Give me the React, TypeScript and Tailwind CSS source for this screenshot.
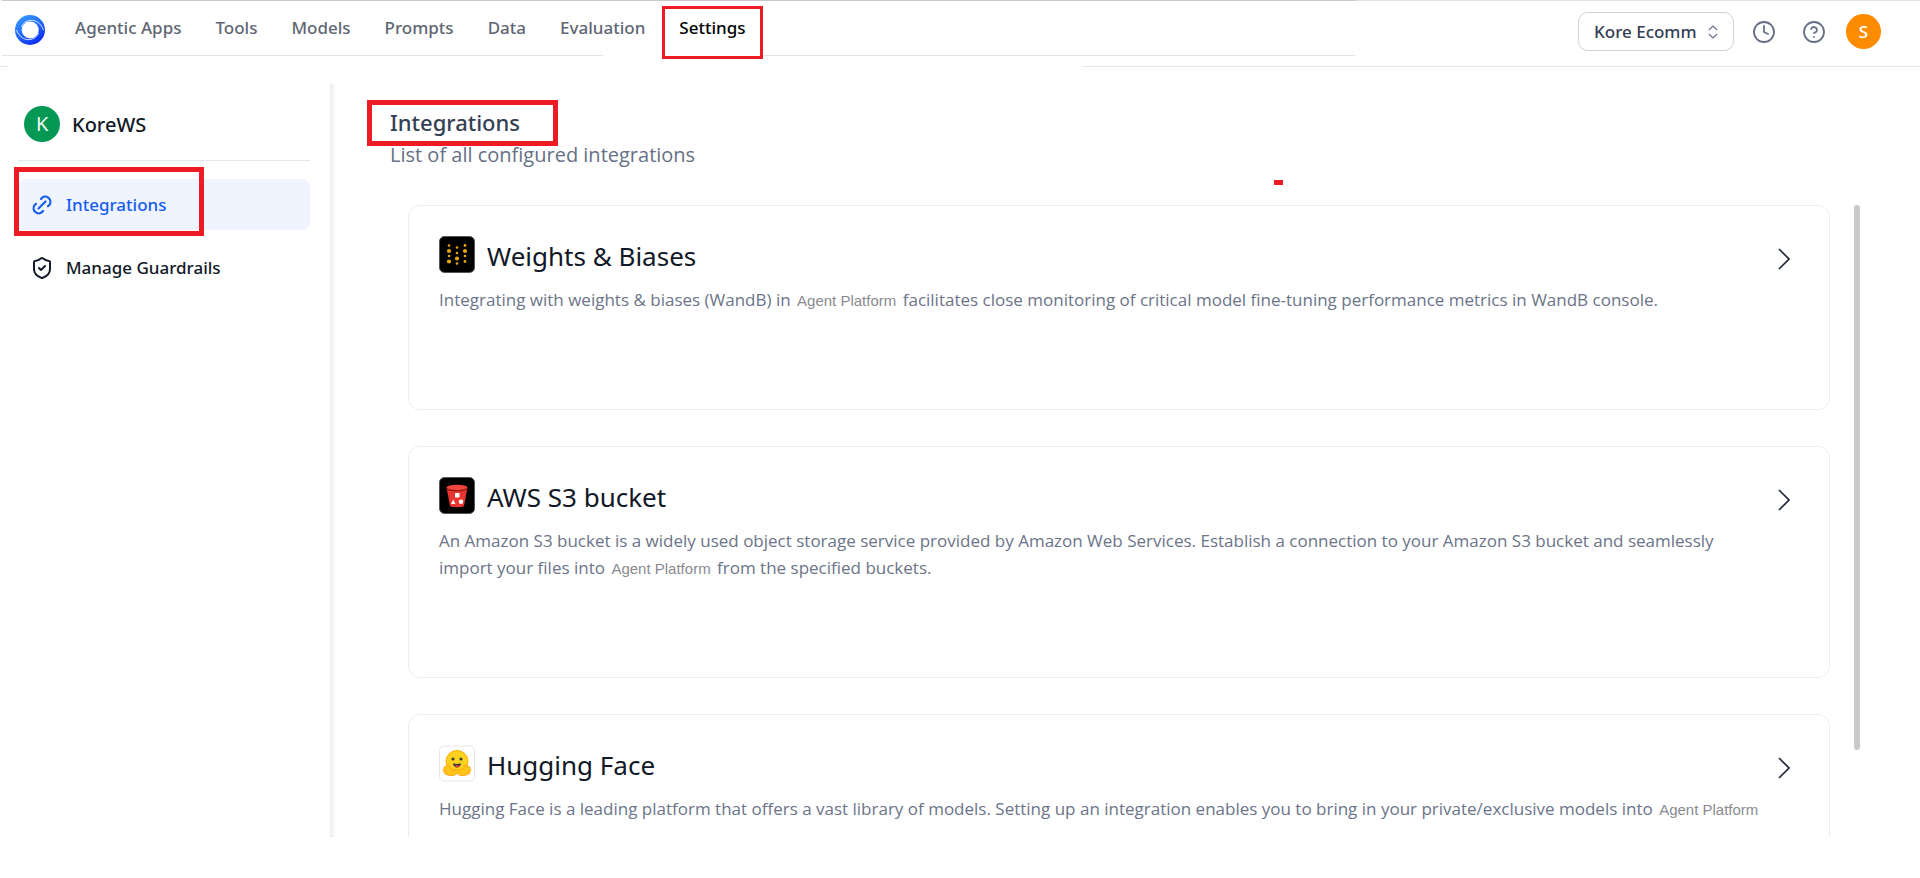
import { ReactNode } from 'react';
import { ChevronsUpDown, CircleHelp, Clock, ShieldCheck } from 'lucide-react';

const navItems = ['Agentic Apps', 'Tools', 'Models', 'Prompts', 'Data', 'Evaluation', 'Settings'];

function Logo() {
  return (
    <svg viewBox="0 0 30 30" className="size-[30px] shrink-0" aria-hidden="true">
      <defs>
        <linearGradient id="ring" x1="0.2" y1="0" x2="0.8" y2="1">
          <stop offset="0" stopColor="#3a9bff" />
          <stop offset="0.5" stopColor="#1f66fb" />
          <stop offset="1" stopColor="#0a22f0" />
        </linearGradient>
      </defs>
      <path
        fillRule="evenodd"
        fill="url(#ring)"
        d="M15 0a15 15 0 1 1 0 30a15 15 0 1 1 0-30zM15.200 6.500a8.500 8.500 0 1 0 0 17a8.500 8.500 0 1 0 0-17z"
      />
      <path d="M6.500 12C8.500 7 13 5 17.500 5.400 23 6 26.500 10 28.500 15" fill="none" stroke="#fff" strokeWidth="0.800" />
      <path d="M23.500 18c-2 5-6.500 7-11 6.600C7 24 3.500 20 1.500 15" fill="none" stroke="#fff" strokeWidth="0.800" />
    </svg>
  );
}

function WandbIcon() {
  const dots = [
    [10, 9.5, 1.3], [10, 15, 2.1], [10, 20, 1.3], [10, 25.5, 2.1],
    [18, 11.5, 1.3], [18, 17, 1.3], [18, 22.5, 2.1], [18, 27.5, 1.3],
    [26, 9.5, 1.4], [26, 15, 2.1], [26, 20, 1.3], [26, 25.5, 1.4],
  ];
  return (
    <svg viewBox="0 0 36 37" className="h-[37px] w-9 shrink-0" aria-hidden="true">
      <rect x="0.500" y="0.500" width="35" height="36" rx="5" fill="#000" stroke="#55555a" />
      {dots.map(([x, y, r]) => (
        <circle key={`${x}-${y}`} cx={x} cy={y} r={r} fill="#e5a50c" />
      ))}
    </svg>
  );
}

function BucketIcon() {
  return (
    <svg viewBox="0 0 36 37" className="h-[37px] w-9 shrink-0" aria-hidden="true">
      <rect x="0.500" y="0.500" width="35" height="36" rx="5" fill="#000" stroke="#55555a" />
      <path d="M7.500 10.500 11 29c1 1.600 13 1.600 14 0l3.500-18.500z" fill="#e8352f" />
      <ellipse cx="18" cy="10.500" rx="10.500" ry="2.800" fill="#f0453c" />
      <path d="M7.700 11.500c3 3 17.600 3 20.600 0" fill="none" stroke="#8f1712" strokeWidth="1.200" />
      <rect x="16" y="16" width="4.500" height="4.500" rx="0.500" fill="#fff" />
      <path d="m14.200 22.500 2.300 4.500h-4.500z" fill="#fff" />
      <circle cx="22" cy="24.800" r="2.300" fill="#fff" />
    </svg>
  );
}

function HuggingFaceIcon() {
  return (
    <svg viewBox="0 0 36 36" className="h-[37px] w-9 shrink-0" aria-hidden="true">
      <rect x="0.500" y="0.500" width="35" height="35" rx="4.500" fill="#fff" stroke="#e5e7eb" />
      <circle cx="18" cy="16" r="11" fill="#ffd21e" stroke="#ffac03" strokeWidth="1" />
      <path
        d="M5 23c-1.500 1.500-.5 3 .3 3.300-.5 1.700 1 2.500 2 2.500 2 1.500 8.500 2.500 10.700-1.300 2.200 3.800 8.700 2.800 10.700 1.300 1 0 2.500-.8 2-2.500.8-.3 1.800-1.800.3-3.300.3-1.800-1-2.800-2.500-2-1.500-2-3-1.500-3 .5-1.500 1-2.500 2-3 3h-9c-.5-1-1.500-2-3-3 0-2-1.500-2.500-3-.5-1.500-.8-2.800.2-2.500 2z"
        fill="#ffc31a"
        stroke="#ff9d0b"
        strokeWidth="0.900"
      />
      <circle cx="14" cy="13.500" r="1.600" fill="#3a3b45" />
      <circle cx="22" cy="13.500" r="1.600" fill="#3a3b45" />
      <path d="M14 17.500c1.500 1.200 6.500 1.200 8 0 0 2.800-1.800 4.500-4 4.500s-4-1.700-4-4.500z" fill="#3a3b45" />
      <path d="M15.800 20.700c.8-1.400 3.600-1.400 4.400 0-1.200 1.700-3.200 1.700-4.400 0z" fill="#f0453c" />
    </svg>
  );
}

function LinkIcon() {
  return (
    <svg viewBox="0 0 24 24" className="size-6" fill="none" stroke="currentColor" strokeWidth="2.200" strokeLinecap="round" aria-hidden="true">
      <path d="m8.500 15.500 7-7" />
      <path d="m11 6 1-1.200a5.200 5.200 0 0 1 7.300 7.300L18 13.200" />
      <path d="m13 18-1 1.200a5.200 5.200 0 0 1-7.300-7.300L6 10.800" />
    </svg>
  );
}

function Product() {
  return <span className="mx-0.5 font-['Liberation_Sans',sans-serif] text-[15px] text-[#8a8a90]">Agent Platform</span>;
}

function Card({ icon, title, size, children }: { icon: ReactNode; title: string; size: string; children: ReactNode }) {
  return (
    <article className={`shrink-0 rounded-xl border border-[#eaecf3] px-[30px] pt-[30px] ${size}`}>
      <div className="flex items-start">
        {icon}
        <h2 className="ml-3 pt-0.5 font-['Noto_Sans',sans-serif] text-[26px] leading-9 text-[#111827]">{title}</h2>
        <button type="button" aria-label={`Open ${title}`} className="mr-[9px] ml-auto pt-3">
          <svg viewBox="0 0 12 22" className="h-[22px] w-3" fill="none" stroke="#1f2937" strokeWidth="1.700">
            <path d="m1 1 10 10L1 21" />
          </svg>
        </button>
      </div>
      <p className="mt-3 pr-8 text-[17px] leading-[27px] text-[#6b7489]">{children}</p>
    </article>
  );
}

export default function App() {
  return (
    <div className="flex h-screen flex-col overflow-hidden bg-white pb-[41px] font-['Open_Sans','Noto_Sans',sans-serif]">
      <header className="relative flex h-[67px] shrink-0 items-start justify-between pr-[39px] pl-[15px]">
        <span className="absolute top-0 right-0 left-0.5 h-px bg-[#e0e0e0]" />
        <span className="absolute top-0 left-0.5 h-px w-[1353px] bg-[#c8c8c8]" />
        <span className="absolute top-[55px] left-0.5 h-px w-[601px] bg-[#e5e5e5]" />
        <span className="absolute top-[55px] left-[763px] h-px w-[592px] bg-[#e5e5e5]" />
        <span className="absolute top-[66px] left-0 h-px w-[9px] bg-[#e5e7eb]" />
        <span className="absolute top-[66px] right-0 left-[1082px] h-px bg-[#e5e7eb]" />
        <div className="flex items-center pt-[15px]">
          <Logo />
          <nav className="-mt-1 ml-[30px] flex gap-[34px] font-['Noto_Sans',sans-serif] text-[17px] leading-6 font-medium text-[#5f6673]">
            {navItems.map((item) =>
              item === 'Settings' ? (
                <a key={item} href="#settings" aria-current="page" className="relative text-black">
                  {item}
                  <span className="absolute -top-[10px] -right-[18px] -left-[17px] h-[53px] border-[3px] border-[#ed1c24]" />
                </a>
              ) : (
                <a key={item} href="#nav">
                  {item}
                </a>
              ),
            )}
          </nav>
        </div>
        <div className="flex items-center pt-3">
          <button
            type="button"
            className="flex h-[39px] w-[156px] items-center justify-between rounded-[10px] border border-[#cbd0da] px-[15px] font-['Noto_Sans',sans-serif] text-[17px] font-medium text-[#344054]"
          >
            Kore Ecomm
            <ChevronsUpDown className="-mr-1 size-[18px] text-[#667085]" strokeWidth={1.5} />
          </button>
          <button type="button" aria-label="History" className="ml-[18px]">
            <Clock className="size-6 text-[#667085]" strokeWidth={1.8} />
          </button>
          <button type="button" aria-label="Help" className="ml-[26px]">
            <CircleHelp className="size-6 text-[#667085]" strokeWidth={1.8} />
          </button>
          <button type="button" className="ml-5 size-[35px] rounded-full bg-[#ff8c00] text-[17px] font-semibold text-white">
            S
          </button>
        </div>
      </header>

      <div className="flex min-h-0 grow pt-[17px]">
        <aside className="w-[330px] shrink-0 pr-5 pl-[18px]">
          <div className="flex h-[77px] items-center border-b border-[#e5e7eb] pt-1 pl-1.5">
            <span className="flex size-9 items-center justify-center rounded-full bg-[#059855] text-xl text-white">K</span>
            <span className="ml-3 pt-0.5 font-['Noto_Sans',sans-serif] text-[20px] font-medium text-[#111827]">KoreWS</span>
          </div>
          <nav className="mt-[18px] flex flex-col gap-3 font-['Noto_Sans',sans-serif] text-[17px] font-medium text-[#111827]">
            <a href="#integrations" className="relative flex h-[51px] items-center gap-3 rounded-lg bg-[#eff4ff] pl-3 text-[#155eef]">
              <LinkIcon />
              Integrations
              <span className="absolute -top-3 -left-1 h-[69px] w-[190px] border-[5px] border-[#ed1c24]" />
            </a>
            <a href="#guardrails" className="flex h-[51px] items-center gap-3 pl-3">
              <ShieldCheck className="size-6" strokeWidth={2} />
              Manage Guardrails
            </a>
          </nav>
        </aside>
        <div className="w-1.5 shrink-0 bg-linear-to-r from-[#ececec] to-white" />

        <main className="flex min-w-0 grow flex-col pr-[60px] pl-[54px]">
          <div className="relative shrink-0 pt-[22px]">
            <h1 className="relative w-fit font-['Noto_Sans',sans-serif] text-[22px] leading-8 font-medium text-[#344054]">
              Integrations
              <span className="absolute -top-[6px] -left-[23px] h-[46px] w-[191px] border-[5px] border-[#ed1c24]" />
            </h1>
            <p className="text-[20px] leading-[34px] text-[#667085]">List of all configured integrations</p>
            <span className="absolute top-24 left-[884px] h-[5px] w-[9px] bg-[#ed1c24]" />
          </div>
          <div className="mt-[33px] flex min-h-0 grow">
            <section className="ml-[18px] flex min-w-0 grow flex-col gap-9 overflow-hidden">
              <Card icon={<WandbIcon />} title="Weights & Biases" size="h-[205px]">
                Integrating with weights &amp; biases (WandB) in <Product /> facilitates close monitoring of critical
                model fine-tuning performance metrics in WandB console.
              </Card>
              <Card icon={<BucketIcon />} title="AWS S3 bucket" size="h-[232px]">
                An Amazon S3 bucket is a widely used object storage service provided by Amazon Web Services. Establish a
                connection to your Amazon S3 bucket and seamlessly import your files into <Product /> from the specified
                buckets.
              </Card>
              <Card icon={<HuggingFaceIcon />} title="Hugging Face" size="h-[205px]">
                Hugging Face is a leading platform that offers a vast library of models. Setting up an integration
                enables you to bring in your private/exclusive models into <Product />
              </Card>
            </section>
            <div className="ml-6 h-[545px] w-1.5 shrink-0 rounded-full bg-[#c9c9c9]" />
          </div>
        </main>
      </div>
    </div>
  );
}
